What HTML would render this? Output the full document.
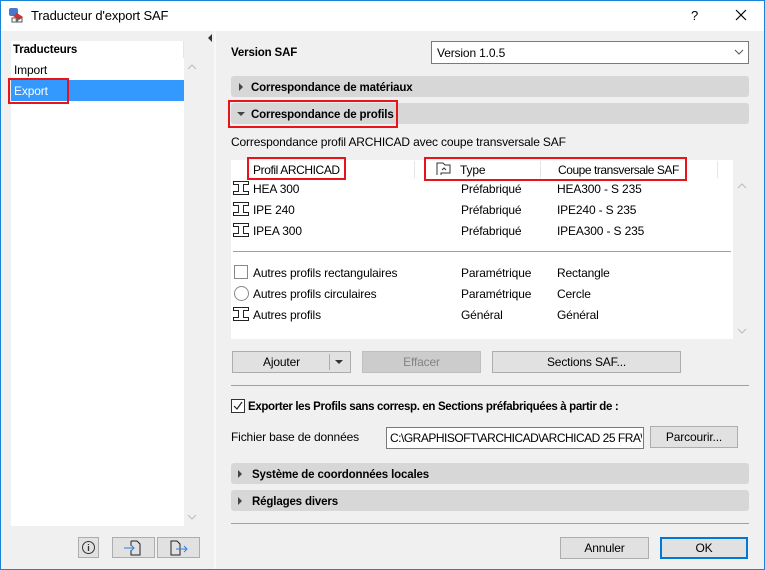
<!DOCTYPE html>
<html><head><meta charset="utf-8"><style>
*{margin:0;padding:0;box-sizing:border-box}
body{width:765px;height:570px;position:relative;background:#f0f0f0;font-family:"Liberation Sans",sans-serif;font-size:12px;color:#000;overflow:hidden;letter-spacing:-0.15px}
.a{position:absolute;white-space:nowrap}
.t{position:absolute;white-space:nowrap;line-height:14px}
.bar{position:absolute;left:231px;width:518px;height:21px;background:#d7d7d7;border-radius:3px}
.bar span{position:absolute;left:20px;top:2px;line-height:21px;font-weight:bold;font-size:11.5px}
.tri{position:absolute;left:8px;top:7px;width:0;height:0;border-top:4px solid transparent;border-bottom:4px solid transparent;border-left:4px solid #444}
.btn{position:absolute;background:#e1e1e1;border:1px solid #adadad;display:flex;align-items:center;justify-content:center;height:22px}
.red{position:absolute;border:2px solid #e8141a}
.ib{position:absolute;left:233px;width:16px;height:14px}
</style></head><body>
<div class="a" style="left:0;top:0;width:765px;height:570px;border:1px solid #1883d7"></div>
<div class="a" style="left:1px;top:1px;width:763px;height:30px;background:#fff"></div>
<svg class="a" style="left:8px;top:7px" width="18" height="18" viewBox="0 0 18 18"><rect x="1" y="1" width="9" height="8" rx="2" fill="#4a78c8"/><path d="M5 9 l4 -3 l6 4 l-4 3z" fill="#c33"/><path d="M4 11 h10 v4 h-10z" fill="none" stroke="#555"/><circle cx="9" cy="13" r="1.5" fill="#666"/></svg>
<div class="t" style="left:31px;top:9px;font-size:13px">Traducteur d'export SAF</div>
<div class="t" style="left:691px;top:9px;font-size:13px">?</div>
<svg class="a" style="left:735px;top:9px" width="12" height="12"><path d="M1 1L11 11M11 1L1 11" stroke="#000" stroke-width="1.2"/></svg>

<div class="a" style="left:214px;top:31px;width:2px;height:538px;background:#f8f8f8"></div>
<div class="a" style="left:11px;top:41px;width:173px;height:485px;background:#fff"></div>
<div class="t" style="left:13px;top:43px;font-weight:bold;font-size:11.5px">Traducteurs</div>
<div class="a" style="left:183px;top:41px;width:1px;height:17px;background:#e5e5e5"></div>
<div class="t" style="left:14px;top:63px">Import</div>
<div class="a" style="left:11px;top:80px;width:173px;height:21px;background:#3399ff"></div>
<div class="t" style="left:14px;top:84px;color:#fff">Export</div>
<div class="red" style="left:8px;top:78px;width:61px;height:26px"></div>
<svg class="a" style="left:187px;top:63px" width="10" height="8"><path d="M1 6L5 2L9 6" stroke="#bbb" fill="none"/></svg>
<svg class="a" style="left:187px;top:513px" width="10" height="8"><path d="M1 2L5 6L9 2" stroke="#bbb" fill="none"/></svg>
<div class="a" style="left:208px;top:34px;width:0;height:0;border-top:4px solid transparent;border-bottom:4px solid transparent;border-right:4px solid #333"></div>
<div class="btn" style="left:78px;top:537px;width:21px;height:21px"></div>
<svg class="a" style="left:81px;top:540px" width="15" height="15"><circle cx="7.5" cy="7.5" r="6" fill="none" stroke="#333"/><path d="M7.5 6v5M7.5 4v1" stroke="#333" stroke-width="1.3"/></svg>
<div class="btn" style="left:112px;top:537px;width:43px;height:21px"></div>
<svg class="a" style="left:122px;top:539px" width="24" height="18"><path d="M9 2h6l3 3v11h-9v-5M9 7V2" fill="none" stroke="#222"/><path d="M2 9h10M9 6l3 3l-3 3" stroke="#2d7fe0" fill="none"/></svg>
<div class="btn" style="left:157px;top:537px;width:43px;height:21px"></div>
<svg class="a" style="left:168px;top:539px" width="24" height="18"><path d="M3 2h6l3 3v11h-9z" fill="none" stroke="#222"/><path d="M8 10h11M16 7l3 3l-3 3" stroke="#2d7fe0" fill="none"/></svg>

<div class="t" style="left:231px;top:46px;font-weight:bold;font-size:11.5px">Version SAF</div>
<div class="a" style="left:431px;top:41px;width:318px;height:23px;background:#fff;border:1px solid #7a7a7a"></div>
<div class="t" style="left:437px;top:46px">Version 1.0.5</div>
<svg class="a" style="left:734px;top:49px" width="10" height="6"><path d="M1 1L5 5L9 1" stroke="#555" fill="none"/></svg>

<div class="bar" style="top:76px"><div class="tri"></div><span>Correspondance de matériaux</span></div>
<div class="bar" style="top:103px"><div style="position:absolute;left:6px;top:9px;border-left:4px solid transparent;border-right:4px solid transparent;border-top:4px solid #444"></div><span>Correspondance de profils</span></div>
<div class="red" style="left:228px;top:100px;width:170px;height:28px"></div>
<div class="t" style="left:231px;top:135px">Correspondance profil ARCHICAD avec coupe transversale SAF</div>

<div class="a" style="left:231px;top:160px;width:502px;height:179px;background:#fff"></div>
<div class="a" style="left:414px;top:161px;width:1px;height:17px;background:#e5e5e5"></div>
<div class="a" style="left:540px;top:161px;width:1px;height:17px;background:#e5e5e5"></div>
<div class="a" style="left:717px;top:161px;width:1px;height:17px;background:#e5e5e5"></div>
<div class="t" style="left:253px;top:163px;letter-spacing:-0.4px">Profil ARCHICAD</div>
<svg class="a" style="left:436px;top:162px" width="16" height="14"><path d="M1 13V1h6l2 2h5v8H5v2" fill="none" stroke="#333"/><path d="M6 8l2-2l2 2" stroke="#333" fill="none"/></svg>
<div class="t" style="left:460px;top:163px">Type</div>
<div class="t" style="left:558px;top:163px;letter-spacing:-0.45px">Coupe transversale SAF</div>
<div class="red" style="left:247px;top:157px;width:99px;height:23px"></div>
<div class="red" style="left:424px;top:157px;width:263px;height:24px"></div>

<svg width="0" height="0" style="position:absolute"><defs><symbol id="ib" viewBox="0 0 16 14"><path d="M0.5 0.5h15v3h-5v7h5v3h-15v-3h5v-7h-5z" fill="none" stroke="#222"/></symbol></defs></svg>
<svg class="ib" style="top:181px"><use href="#ib"/></svg>
<svg class="ib" style="top:202px"><use href="#ib"/></svg>
<svg class="ib" style="top:223px"><use href="#ib"/></svg>
<svg class="ib" style="top:307px"><use href="#ib"/></svg>
<div class="t" style="left:253px;top:182px">HEA 300</div>
<div class="t" style="left:253px;top:203px">IPE 240</div>
<div class="t" style="left:253px;top:224px">IPEA 300</div>
<div class="t" style="left:461px;top:182px">Préfabriqué</div>
<div class="t" style="left:461px;top:203px">Préfabriqué</div>
<div class="t" style="left:461px;top:224px">Préfabriqué</div>
<div class="t" style="left:557px;top:182px">HEA300 - S 235</div>
<div class="t" style="left:557px;top:203px">IPE240 - S 235</div>
<div class="t" style="left:557px;top:224px">IPEA300 - S 235</div>
<div class="a" style="left:233px;top:251px;width:498px;height:1px;background:#a0a0a0"></div>
<div class="a" style="left:234px;top:265px;width:14px;height:14px;border:1px solid #888;background:#fff"></div>
<div class="a" style="left:234px;top:286px;width:15px;height:15px;border:1px solid #888;border-radius:50%;background:#fff"></div>
<div class="t" style="left:253px;top:266px">Autres profils rectangulaires</div>
<div class="t" style="left:253px;top:287px">Autres profils circulaires</div>
<div class="t" style="left:253px;top:308px">Autres profils</div>
<div class="t" style="left:461px;top:266px">Paramétrique</div>
<div class="t" style="left:461px;top:287px">Paramétrique</div>
<div class="t" style="left:461px;top:308px">Général</div>
<div class="t" style="left:557px;top:266px">Rectangle</div>
<div class="t" style="left:557px;top:287px">Cercle</div>
<div class="t" style="left:557px;top:308px">Général</div>
<svg class="a" style="left:737px;top:182px" width="10" height="8"><path d="M1 6L5 2L9 6" stroke="#bbb" fill="none"/></svg>
<svg class="a" style="left:737px;top:327px" width="10" height="8"><path d="M1 2L5 6L9 2" stroke="#bbb" fill="none"/></svg>

<div class="btn" style="left:232px;top:351px;width:119px;padding-right:20px">Ajouter</div>
<div class="a" style="left:329px;top:354px;width:1px;height:16px;background:#adadad"></div>
<div class="a" style="left:335px;top:360px;border-left:4px solid transparent;border-right:4px solid transparent;border-top:4px solid #333"></div>
<div class="btn" style="left:362px;top:351px;width:119px;background:#cccccc;border-color:#bfbfbf;color:#838383">Effacer</div>
<div class="btn" style="left:492px;top:351px;width:189px">Sections SAF...</div>
<div class="a" style="left:231px;top:385px;width:518px;height:1px;background:#a0a0a0"></div>

<div class="a" style="left:231px;top:399px;width:14px;height:14px;border:1px solid #333;background:#fff"></div>
<svg class="a" style="left:232px;top:400px" width="12" height="12"><path d="M2 6l3 3l5-7" stroke="#222" fill="none" stroke-width="1.2"/></svg>
<div class="t" style="left:248px;top:400px;font-weight:bold;font-size:11.5px;letter-spacing:-0.35px">Exporter les Profils sans corresp. en Sections préfabriquées à partir de :</div>
<div class="t" style="left:231px;top:430px">Fichier base de données</div>
<div class="a" style="left:386px;top:427px;width:258px;height:22px;background:#fff;border:1px solid #7a7a7a;overflow:hidden"></div>
<div class="t" style="left:390px;top:431px;width:252px;overflow:hidden;letter-spacing:-0.5px">C:\GRAPHISOFT\ARCHICAD\ARCHICAD 25 FRA\Dé</div>
<div class="btn" style="left:650px;top:426px;width:88px">Parcourir...</div>

<div class="bar" style="top:463px"><div class="tri" style="left:7px"></div><span style="left:21px">Système de coordonnées locales</span></div>
<div class="bar" style="top:490px"><div class="tri" style="left:7px"></div><span style="left:21px">Réglages divers</span></div>
<div class="a" style="left:231px;top:523px;width:518px;height:1px;background:#a0a0a0"></div>
<div class="btn" style="left:560px;top:537px;width:89px">Annuler</div>
<div class="btn" style="left:660px;top:537px;width:88px;border:2px solid #0078d7">OK</div>
</body></html>
